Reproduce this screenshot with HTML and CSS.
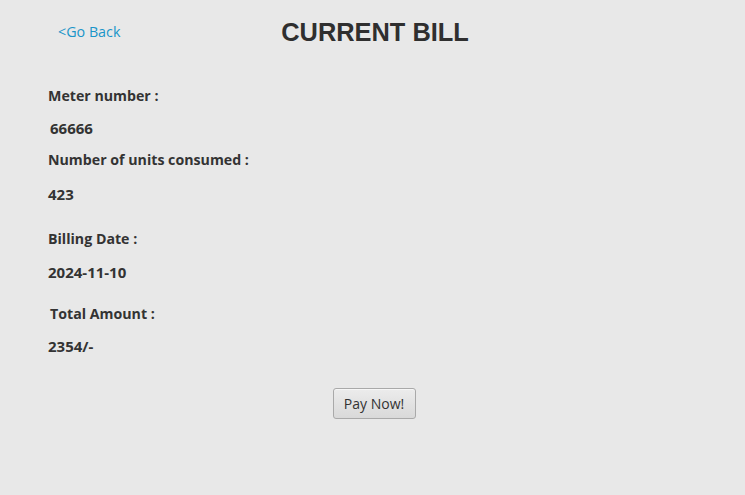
FILE: index.html
```html
<!DOCTYPE html>
<html>
<head>
<meta charset="utf-8">
<link rel="stylesheet" href="styles.css">
</head>
<body>
<div class="page">
  <header class="header">
    <a class="back" href="#">&lt;Go Back</a>
    <h1 class="title">CURRENT BILL</h1>
    <span></span>
  </header>
  <main class="details">
    <div class="row label r1">Meter number :</div>
    <div class="row value r2 indent">66666</div>
    <div class="row label r3">Number of units consumed :</div>
    <div class="row value r4">423</div>
    <div class="row label r5">Billing Date :</div>
    <div class="row value r6">2024-11-10</div>
    <div class="row label r7 indent">Total Amount :</div>
    <div class="row value r8">2354/-</div>
  </main>
  <div class="actions">
    <button class="pay">Pay Now!</button>
  </div>
</div>
</body>
</html>
```
FILE: styles.css
```css
html, body {
  margin: 0;
  padding: 0;
  background: #e8e8e8;
}
.page {
  width: 745px;
  height: 495px;
  background: #e8e8e8;
  font-family: "Open Sans", "Noto Sans", sans-serif;
  color: #333333;
}
.header {
  height: 64px;
  display: grid;
  grid-template-columns: 1fr auto 1fr;
  align-items: center;
  padding-left: 5px;
}
.back {
  justify-self: start;
  margin-left: 53px;
  color: #1a95c9;
  text-decoration: none;
  font-size: 14.3px;
  line-height: 20px;
}
.title {
  margin: 0;
  font-family: "Liberation Sans", Arial, sans-serif;
  font-weight: bold;
  font-size: 25.4px;
  line-height: 30px;
  color: #2f2f2f;
}
.details {
  padding-left: 48px;
  display: flex;
  flex-direction: column;
}
.row {
  font-weight: bold;
  font-size: 14.2px;
  line-height: 20px;
  height: 20px;
  white-space: nowrap;
}
.value {
  font-size: 15px;
}
.indent { padding-left: 2px; }
.r1 { margin-top: 22px; }
.r2 { margin-top: 12px; }
.r3 { margin-top: 12px; }
.r4 { margin-top: 14px; }
.r5 { margin-top: 25px; }
.r6 { margin-top: 13px; }
.r7 { margin-top: 22px; }
.r8 { margin-top: 12px; }
.actions {
  display: flex;
  justify-content: center;
  margin-top: 32px;
  padding-left: 3px;
}
.pay {
  width: 83px;
  height: 31px;
  padding: 0;
  font-family: "Open Sans", "Noto Sans", sans-serif;
  font-size: 14px;
  color: #333333;
  border: 1px solid #a9a9a9;
  border-radius: 3px;
  background: linear-gradient(#ececec, #d9d9d9);
  box-shadow: inset 0 1px 0 #f6f6f6;
}
```
